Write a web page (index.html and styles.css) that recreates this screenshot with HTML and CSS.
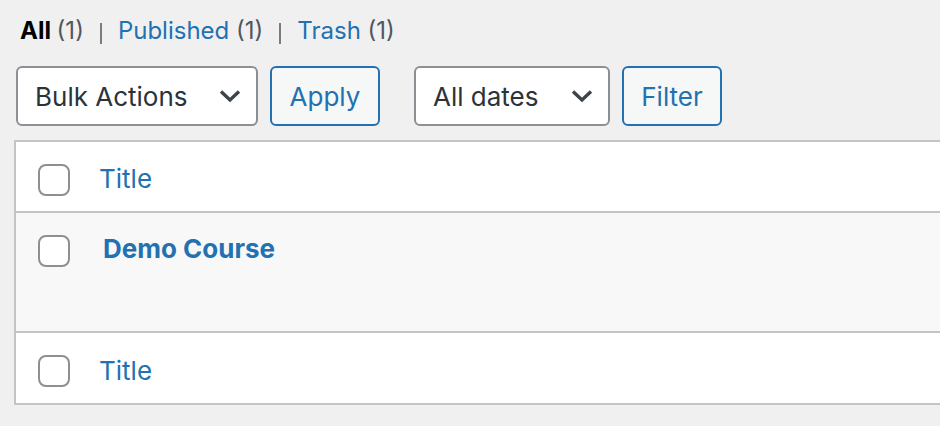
FILE: index.html
```html
<!DOCTYPE html>
<html lang="en">
<head>
<meta charset="utf-8">
<title>Courses</title>
<link rel="stylesheet" href="styles.css">
</head>
<body>
<div class="wrap">
  <ul class="subsubsub">
    <li><a class="current">All <span class="count">(1)</span></a></li>
    <li class="sep"></li>
    <li><a>Published <span class="count">(1)</span></a></li>
    <li class="sep"></li>
    <li><a>Trash <span class="count">(1)</span></a></li>
  </ul>

  <div class="tablenav">
    <div class="select bulk">
      <span>Bulk Actions</span>
      <svg class="chev" width="22" height="14" viewBox="0 0 22 14"><path d="M2 2.5 L11 11 L20 2.5" fill="none" stroke="#3c434a" stroke-width="3.4"/></svg>
    </div>
    <button class="button apply">Apply</button>
    <div class="select dates">
      <span>All dates</span>
      <svg class="chev" width="22" height="14" viewBox="0 0 22 14"><path d="M2 2.5 L11 11 L20 2.5" fill="none" stroke="#3c434a" stroke-width="3.4"/></svg>
    </div>
    <button class="button filter">Filter</button>
  </div>

  <div class="table">
    <div class="trow head">
      <div class="cb"><span class="checkbox"></span></div>
      <a class="col-title">Title</a>
    </div>
    <div class="trow item">
      <div class="cb"><span class="checkbox"></span></div>
      <a class="row-title">Demo Course</a>
    </div>
    <div class="trow foot">
      <div class="cb"><span class="checkbox"></span></div>
      <a class="col-title">Title</a>
    </div>
  </div>
</div>
</body>
</html>
```

FILE: styles.css
```css
* { box-sizing: border-box; }
html, body { margin: 0; padding: 0; }
body {
  background: #f0f0f1;
  font-family: Inter, "Noto Sans", "Liberation Sans", sans-serif;
  color: #3c434a;
  width: 940px;
  height: 426px;
  overflow: hidden;
}
.wrap { padding: 0 0 0 14px; }

.subsubsub {
  list-style: none;
  margin: 0;
  padding: 14px 0 0 6px;
  display: flex;
  align-items: baseline;
  font-size: 24px;
  line-height: 34px;
  height: 66px;
}
.subsubsub li { display: block; }
.subsubsub a { color: #2271b1; text-decoration: none; }
.subsubsub a.current { color: #000; font-weight: 700; }
.subsubsub .count { color: #50575e; font-weight: 400; }
.subsubsub .sep {
  align-self: flex-start;
  width: 2px;
  height: 21px;
  margin: 9px 16px 0 16px;
  background: #787c82;
}

.tablenav {
  display: flex;
  align-items: center;
  height: 60px;
  margin-left: 2px;
}
.select {
  height: 60px;
  background: #fff;
  border: 2px solid #8c8f94;
  border-radius: 6px;
  display: flex;
  align-items: center;
  justify-content: space-between;
  padding: 0 15px 0 17px;
  font-size: 26px;
  color: #2c3338;
}
.select.bulk { width: 242px; }
.select.dates { width: 196px; margin-left: 34px; }
.chev { display: block; }
.button {
  height: 60px;
  margin-left: 12px;
  background: #f6f7f7;
  border: 2px solid #2271b1;
  border-radius: 6px;
  color: #2271b1;
  font-family: inherit;
  font-size: 26px;
  padding: 0;
}
.button.apply { width: 110px; }
.button.filter { width: 100px; }

.table {
  margin-top: 14px;
  width: 940px;
  border: 2px solid #c3c4c7;
  border-right: none;
  background: #fff;
}
.trow {
  display: flex;
  align-items: center;
}
.trow.head { height: 71px; border-bottom: 2px solid #c3c4c7; }
.trow.item { height: 118px; background: #f8f8f8; align-items: flex-start; padding-top: 22px; }
.trow.foot { height: 72px; border-top: 2px solid #c3c4c7; }
.cb { width: 83px; padding-left: 22px; display: flex; }
.trow.head .cb, .trow.foot .cb { padding-top: 6px; }
.checkbox {
  display: block;
  width: 32px;
  height: 32px;
  border: 2px solid #8c8f94;
  border-radius: 8px;
  background: #fff;
}
.col-title {
  color: #2271b1;
  font-size: 26px;
  text-decoration: none;
  padding-top: 4px;
}
.row-title {
  color: #2271b1;
  font-size: 26px;
  font-weight: 700;
  text-decoration: none;
  margin-left: 4px;
  margin-top: -2px;
}
```
